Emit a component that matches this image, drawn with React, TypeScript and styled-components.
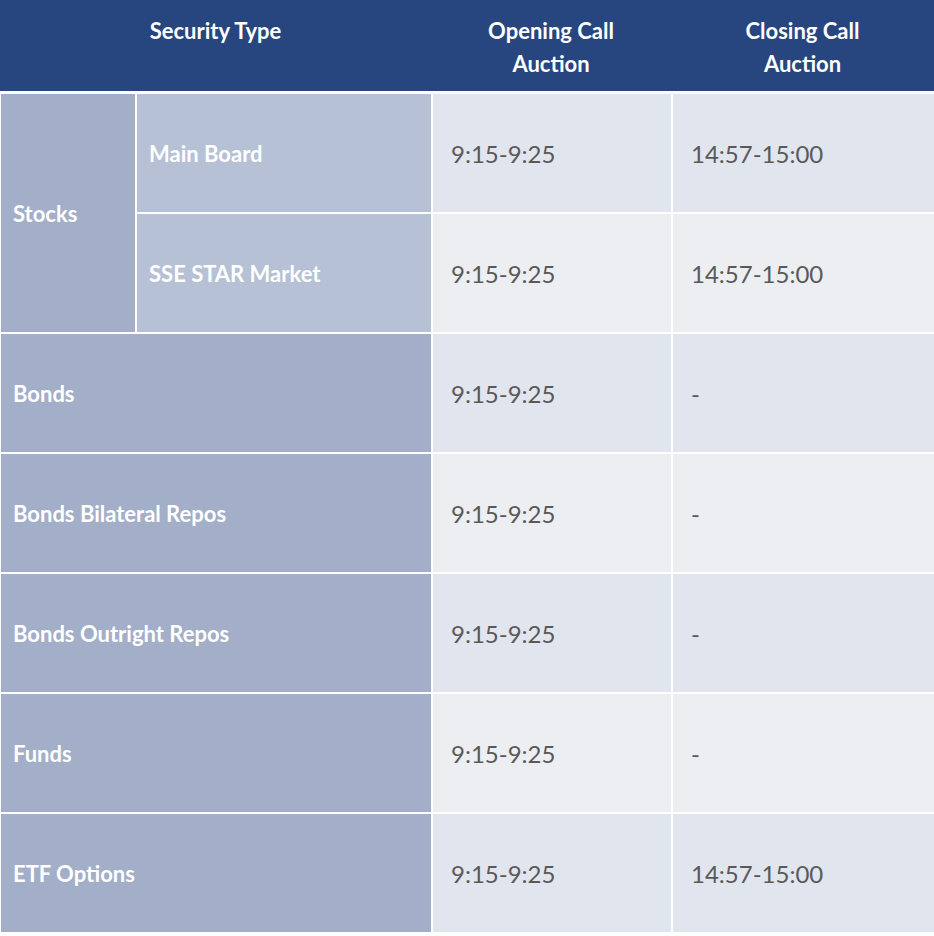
import React from "react";
import styled, { createGlobalStyle } from "styled-components";

const Global = createGlobalStyle`
  html, body { margin: 0; padding: 0; background: #ffffff; }
  body { font-family: Lato, "Open Sans", sans-serif; }
`;

const Table = styled.div`
  width: 934px;
  display: flex;
  flex-direction: column;
  gap: 3px;
  background: #ffffff;
`;

const Header = styled.div`
  height: 91px;
  background: #27457e;
  display: grid;
  grid-template-columns: 431px 240px 1fr;
`;

const HeadCell = styled.div`
  text-align: center;
  color: #ffffff;
  font-weight: 700;
  font-size: 22px;
  line-height: 33px;
  padding-top: 14px;
`;

const Body = styled.div`
  display: grid;
  grid-template-columns: 134px 294px 238px 1fr;
  grid-auto-rows: 118px;
  gap: 2px;
  padding-left: 1px;
`;

const Label = styled.div<{ $span?: number; $rows?: number; $tone?: "dark" | "light" }>`
  grid-column: span ${(p) => p.$span ?? 1};
  grid-row: span ${(p) => p.$rows ?? 1};
  background: ${(p) => (p.$tone === "light" ? "#b6c1d5" : "#a3aec8")};
  color: #ffffff;
  font-weight: 700;
  font-size: 22px;
  display: flex;
  align-items: center;
  padding-left: 12px;
`;

const Data = styled.div<{ $alt: boolean }>`
  background: ${(p) => (p.$alt ? "#edeef2" : "#e1e5ee")};
  color: #595959;
  font-size: 24px;
  display: flex;
  align-items: center;
  padding-left: 18px;
`;

const rows = [
  { open: "9:15-9:25", close: "14:57-15:00" },
  { open: "9:15-9:25", close: "14:57-15:00" },
  { label: "Bonds", open: "9:15-9:25", close: "-" },
  { label: "Bonds Bilateral Repos", open: "9:15-9:25", close: "-" },
  { label: "Bonds Outright Repos", open: "9:15-9:25", close: "-" },
  { label: "Funds", open: "9:15-9:25", close: "-" },
  { label: "ETF Options", open: "9:15-9:25", close: "14:57-15:00" },
];

export default function App() {
  return (
    <>
      <Global />
      <Table>
        <Header>
          <HeadCell>Security Type</HeadCell>
          <HeadCell>
            Opening Call
            <br />
            Auction
          </HeadCell>
          <HeadCell>
            Closing Call
            <br />
            Auction
          </HeadCell>
        </Header>
        <Body>
          <Label $rows={2}>Stocks</Label>
          <Label $tone="light">Main Board</Label>
          <Data $alt={false}>{rows[0].open}</Data>
          <Data $alt={false}>{rows[0].close}</Data>
          <Label $tone="light">SSE STAR Market</Label>
          <Data $alt={true}>{rows[1].open}</Data>
          <Data $alt={true}>{rows[1].close}</Data>
          {rows.slice(2).map((r, i) => (
            <React.Fragment key={r.label}>
              <Label $span={2}>{r.label}</Label>
              <Data $alt={i % 2 === 1}>{r.open}</Data>
              <Data $alt={i % 2 === 1}>{r.close}</Data>
            </React.Fragment>
          ))}
        </Body>
      </Table>
    </>
  );
}
